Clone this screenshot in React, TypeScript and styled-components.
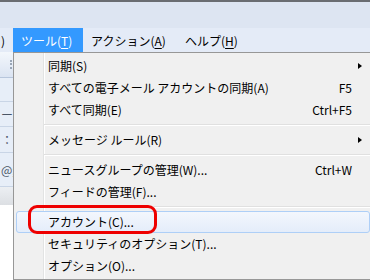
import React from 'react';
import styled, { createGlobalStyle } from 'styled-components';

const Global = createGlobalStyle`
  html, body { margin: 0; padding: 0; }
  body {
    width: 370px; height: 280px; overflow: hidden; background: #fff;
    font-family: "Noto Sans CJK JP", "Noto Sans", sans-serif;
    font-size: 12px; color: #000;
  }
`;

const Window = styled.div`
  position: relative;
  width: 370px;
  height: 280px;
  overflow: hidden;
  display: flex;
  flex-direction: column;
  background: #fff;
`;

const TitleBand = styled.div`
  height: 26px;
  border-top: 2px solid #6a6d72;
  background: #dde5f2;
`;

const MenuBar = styled.div`
  height: 24px;
  display: flex;
  align-items: stretch;
  background: #e4ebf7;
`;

const MenuBarItem = styled.div<{ $active?: boolean; $w: number }>`
  width: ${p => p.$w}px;
  box-sizing: border-box;
  display: flex;
  align-items: center;
  padding-left: 8px;
  white-space: nowrap;
  background: ${p => (p.$active ? '#3399ff' : 'transparent')};
  color: ${p => (p.$active ? '#fff' : '#000')};
`;

const CutItem = styled.div`
  width: 12px;
  padding-left: 1px;
  display: flex;
  align-items: center;
  overflow: hidden;
`;

const U = styled.span`
  text-decoration: underline;
  text-underline-offset: 2px;
`;

const Toolbar = styled.div`
  height: 25px;
  display: flex;
  align-items: center;
  padding-left: 10px;
  background: linear-gradient(#f3f7fc, #dbe4f2);
  border-bottom: 1px solid #b7c6dc;
`;

const Grip = styled.div`
  width: 0;
  height: 9px;
  border-left: 2px dotted #9aa6b6;
`;

const HeaderRow = styled.div<{ $h: number }>`
  height: ${p => p.$h}px;
  display: flex;
  align-items: center;
  padding-left: 1px;
  background: #e7eef8;
  border-bottom: 1px solid #c9d5e6;
  color: #4a5566;
`;

const HeaderLabel = styled.span`
  width: 12px;
  overflow: hidden;
  white-space: nowrap;
`;

const GreyBand = styled.div`
  height: 18px;
  background: linear-gradient(#eceff3, #dcdfe3);
`;

const Dropdown = styled.div`
  position: absolute;
  left: 13px;
  top: 52px;
  width: 360px;
  box-sizing: border-box;
  padding: 2px;
  border: 1px solid #979797;
  background:
    linear-gradient(to right,
      transparent 29px, #e2e3e3 29px, #e2e3e3 30px,
      #ffffff 30px, #ffffff 31px, transparent 31px),
    #f0f0f0;
`;

const Item = styled.div<{ $hover?: boolean }>`
  position: relative;
  height: 22px;
  box-sizing: border-box;
  display: grid;
  grid-template-columns: 1fr auto 17px;
  align-items: center;
  padding-left: 31px;
  border: 1px solid ${p => (p.$hover ? '#aecff7' : 'transparent')};
  border-radius: 3px;
  background: ${p => (p.$hover ? 'linear-gradient(#f3f7fd, #e4edfa)' : 'transparent')};
  white-space: nowrap;
`;

const Label = styled.span`
  line-height: 20px;
`;

const Shortcut = styled.span`
  text-align: right;
  line-height: 20px;
`;

const Arrow = styled.span`
  width: 0;
  height: 0;
  margin-left: 6px;
  border-top: 3.5px solid transparent;
  border-bottom: 3.5px solid transparent;
  border-left: 4px solid #000;
`;

const Separator = styled.div`
  margin: 3px 0 3px 28px;
  border-top: 1px solid #e0e0e0;
  border-bottom: 1px solid #ffffff;
`;

const Annotation = styled.div`
  position: absolute;
  left: 11px;
  top: -7px;
  width: 129px;
  height: 29px;
  box-sizing: border-box;
  border: 3px solid #ee0000;
  border-radius: 9px;
  pointer-events: none;
`;

type Entry =
  | { kind: 'item'; label: string; shortcut?: string; sub?: boolean; hover?: boolean }
  | { kind: 'sep' };

const entries: Entry[] = [
  { kind: 'item', label: '同期(S)', sub: true },
  { kind: 'item', label: 'すべての電子メール アカウントの同期(A)', shortcut: 'F5' },
  { kind: 'item', label: 'すべて同期(E)', shortcut: 'Ctrl+F5' },
  { kind: 'sep' },
  { kind: 'item', label: 'メッセージ ルール(R)', sub: true },
  { kind: 'sep' },
  { kind: 'item', label: 'ニュースグループの管理(W)...', shortcut: 'Ctrl+W' },
  { kind: 'item', label: 'フィードの管理(F)...' },
  { kind: 'sep' },
  { kind: 'item', label: 'アカウント(C)...', hover: true },
  { kind: 'item', label: 'セキュリティのオプション(T)...' },
  { kind: 'item', label: 'オプション(O)...' },
];

export default function App() {
  return (
    <Window>
      <Global />
      <TitleBand />
      <MenuBar>
        <CutItem>)</CutItem>
        <MenuBarItem $active $w={70}>
          ツール(<U>T</U>)
        </MenuBarItem>
        <MenuBarItem $w={94}>
          アクション(<U>A</U>)
        </MenuBarItem>
        <MenuBarItem $w={70}>
          ヘルプ(<U>H</U>)
        </MenuBarItem>
      </MenuBar>
      <Toolbar>
        <Grip />
      </Toolbar>
      <HeaderRow $h={23} />
      <HeaderRow $h={24}>
        <HeaderLabel>ー：</HeaderLabel>
      </HeaderRow>
      <HeaderRow $h={25}>
        <HeaderLabel>：；</HeaderLabel>
      </HeaderRow>
      <HeaderRow $h={33}>
        <HeaderLabel>@;</HeaderLabel>
      </HeaderRow>
      <GreyBand />

      <Dropdown>
        {entries.map((e, i) =>
          e.kind === 'sep' ? (
            <Separator key={i} />
          ) : (
            <Item key={i} $hover={e.hover}>
              <Label>{e.label}</Label>
              <Shortcut>{e.shortcut ?? ''}</Shortcut>
              {e.sub ? <Arrow /> : <span />}
              {e.hover && <Annotation />}
            </Item>
          )
        )}
      </Dropdown>
    </Window>
  );
}
